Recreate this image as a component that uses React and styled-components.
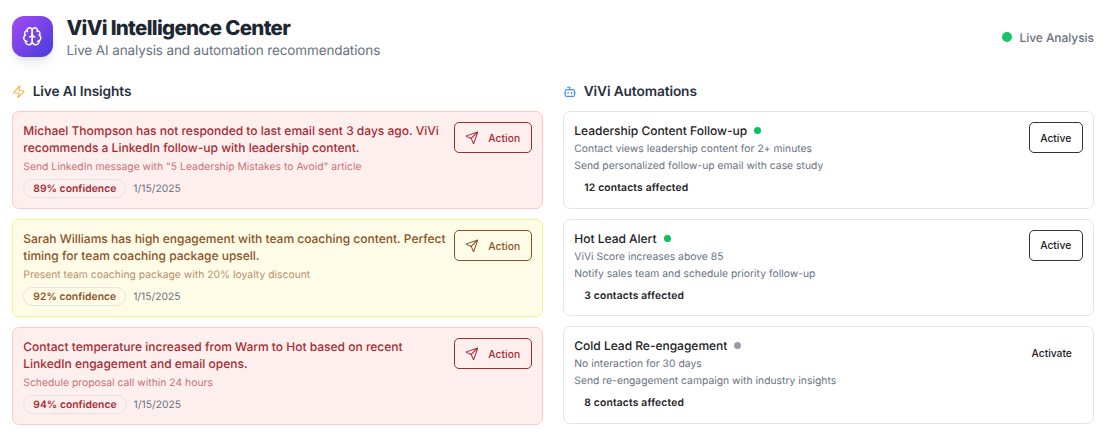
import React from "react";
import styled, { createGlobalStyle } from "styled-components";
import { Zap, Bot, Send } from "lucide-react";

const GlobalStyle = createGlobalStyle`
  *, *::before, *::after { box-sizing: border-box; }
  body {
    margin: 0;
    background: #fff;
    font-family: Inter, "Liberation Sans", sans-serif;
    -webkit-font-smoothing: antialiased;
    text-rendering: geometricPrecision;
  }
  h1, h2, h3, p { margin: 0; }
`;

const tones = {
  red: { bg: "#feefef", border: "#fdc9c9", text: "#a52a30", soft: "#c87075" },
  yellow: { bg: "#fefce6", border: "#fdee8e", text: "#8a5128", soft: "#b58f70" },
};

const Page = styled.main`
  width: 1110px;
  height: 442px;
  padding: 16px 16px 0 12px;
  overflow: hidden;
`;

const Header = styled.header`
  display: flex;
  align-items: flex-start;
  justify-content: space-between;
  height: 41px;
`;

const Brand = styled.div`
  display: flex;
  align-items: flex-start;
  gap: 13.5px;
`;

const Logo = styled.div`
  display: grid;
  place-items: center;
  width: 41px;
  height: 41px;
  border-radius: 12px;
  color: #fff;
  background: linear-gradient(135deg, #a24bf2, #4a3bdc);
  box-shadow: 0 8px 12px -3px rgba(0, 0, 0, 0.1), 0 3px 5px -3px rgba(0, 0, 0, 0.1);
`;

const Title = styled.h1`
  font-size: 20.5px;
  line-height: 24px;
  font-weight: 800;
  letter-spacing: -0.7px;
  color: #1d2733;
`;

const Subtitle = styled.p`
  font-size: 13.5px;
  line-height: 22px;
  letter-spacing: -0.12px;
  color: #68717f;
`;

const Live = styled.div`
  display: flex;
  align-items: center;
  gap: 7px;
  height: 42px;
  font-size: 12px;
  font-weight: 500;
  letter-spacing: -0.05px;
  color: #68717f;
`;

const Dot = styled.span`
  flex: none;
  width: ${(p) => p.$size}px;
  height: ${(p) => p.$size}px;
  border-radius: 50%;
  background: ${(p) => p.$color};
`;

const Columns = styled.div`
  display: grid;
  grid-template-columns: 1fr 1fr;
  column-gap: 20px;
  margin-top: 23px;
`;

const SectionTitle = styled.h2`
  display: flex;
  align-items: center;
  gap: 7px;
  height: 23px;
  margin-bottom: 8px;
  font-size: 13.7px;
  font-weight: 600;
  letter-spacing: -0.1px;
  color: #27313e;
`;

const List = styled.div`
  display: flex;
  flex-direction: column;
  gap: 10px;
`;

const Card = styled.article`
  display: flex;
  align-items: flex-start;
  justify-content: space-between;
  height: ${(p) => p.$height}px;
  padding: 10.3px;
  border: 1px solid ${(p) => (p.$tone ? p.$tone.border : "#e4e5e9")};
  border-radius: 7px;
  color: ${(p) => (p.$tone ? p.$tone.text : "#202124")};
  background: ${(p) => (p.$tone ? p.$tone.bg : "#fff")};
`;

const InsightText = styled.h3`
  font-size: 12px;
  line-height: 17px;
  font-weight: 500;
  white-space: pre;
`;

const InsightNote = styled.p`
  margin-top: 3.5px;
  font-size: 10.3px;
  line-height: 14px;
  letter-spacing: 0.03px;
  color: ${(p) => p.$color};
`;

const Meta = styled.div`
  display: flex;
  align-items: center;
  gap: 7px;
  margin-top: 5.5px;
`;

const Confidence = styled.span`
  display: flex;
  align-items: center;
  height: 19px;
  padding: 0 9px;
  border: 1px solid #e3e4e8;
  border-radius: 10px;
  font-size: 10.3px;
  font-weight: 600;
  letter-spacing: 0.05px;
`;

const DateText = styled.time`
  font-size: 10.3px;
  color: #68717f;
`;

const ActionButton = styled.button`
  display: flex;
  flex: none;
  align-items: center;
  justify-content: space-between;
  width: 78px;
  height: 31px;
  padding: 0 10.5px;
  border: 1px solid currentColor;
  border-radius: 5px;
  background: transparent;
  color: inherit;
  font: 500 10.3px Inter, sans-serif;
  letter-spacing: 0.05px;
`;

const StateButton = styled.button`
  flex: none;
  width: ${(p) => (p.$outlined ? 54 : 62)}px;
  height: 31px;
  padding: 0;
  border: 1px solid ${(p) => (p.$outlined ? "#333" : "transparent")};
  border-radius: 5px;
  background: transparent;
  color: #202124;
  font: 500 10.3px Inter, sans-serif;
`;

const AutomationName = styled.h3`
  display: flex;
  align-items: center;
  gap: 7px;
  margin-bottom: 2px;
  font-size: 12px;
  line-height: 17px;
  font-weight: 500;
  letter-spacing: -0.01px;
`;

const AutomationLine = styled.p`
  font-size: 10.3px;
  line-height: 17px;
  letter-spacing: 0.03px;
  color: #68717f;
`;

const Affected = styled.p`
  margin-top: 6px;
  padding-left: 10px;
  font-size: 10.3px;
  line-height: 14px;
  font-weight: 600;
  letter-spacing: 0.17px;
`;

const BrainIcon = () => (
  <svg
    width="20.5"
    height="20.5"
    viewBox="0 0 24 24"
    fill="none"
    stroke="currentColor"
    strokeWidth="1.75"
    strokeLinecap="round"
    strokeLinejoin="round"
  >
    <path d="M12 5a3 3 0 1 0-5.997.125 4 4 0 0 0-2.526 5.77 4 4 0 0 0 .556 6.588A4 4 0 1 0 12 18Z" />
    <path d="M12 5a3 3 0 1 1 5.997.125 4 4 0 0 1 2.526 5.77 4 4 0 0 1-.556 6.588A4 4 0 1 1 12 18Z" />
    <path d="M15 13a4.5 4.5 0 0 1-3-4 4.5 4.5 0 0 1-3 4" />
    <path d="M17.599 6.5a3 3 0 0 0 .399-1.375" />
    <path d="M6.003 5.125A3 3 0 0 0 6.401 6.5" />
    <path d="M3.477 10.896a4 4 0 0 1 .585-.396" />
    <path d="M19.938 10.5a4 4 0 0 1 .585.396" />
    <path d="M6 18a4 4 0 0 1-1.967-.516" />
    <path d="M19.967 17.484A4 4 0 0 1 18 18" />
  </svg>
);

const insights = [
  {
    tone: tones.red,
    text: "Michael Thompson has not responded to last email sent 3 days ago. ViVi\nrecommends a LinkedIn follow-up with leadership content.",
    note: 'Send LinkedIn message with "5 Leadership Mistakes to Avoid" article',
    confidence: 89,
  },
  {
    tone: tones.yellow,
    text: "Sarah Williams has high engagement with team coaching content. Perfect\ntiming for team coaching package upsell.",
    note: "Present team coaching package with 20% loyalty discount",
    confidence: 92,
  },
  {
    tone: tones.red,
    text: "Contact temperature increased from Warm to Hot based on recent\nLinkedIn engagement and email opens.",
    note: "Schedule proposal call within 24 hours",
    confidence: 94,
  },
];

const automations = [
  {
    name: "Leadership Content Follow-up",
    trigger: "Contact views leadership content for 2+ minutes",
    action: "Send personalized follow-up email with case study",
    count: 12,
    active: true,
  },
  {
    name: "Hot Lead Alert",
    trigger: "ViVi Score increases above 85",
    action: "Notify sales team and schedule priority follow-up",
    count: 3,
    active: true,
  },
  {
    name: "Cold Lead Re-engagement",
    trigger: "No interaction for 30 days",
    action: "Send re-engagement campaign with industry insights",
    count: 8,
    active: false,
  },
];

export default function App() {
  return (
    <Page>
      <GlobalStyle />
      <Header>
        <Brand>
          <Logo>
            <BrainIcon />
          </Logo>
          <div>
            <Title>ViVi Intelligence Center</Title>
            <Subtitle>Live AI analysis and automation recommendations</Subtitle>
          </div>
        </Brand>
        <Live>
          <Dot $size={10} $color="#19c468" />
          Live Analysis
        </Live>
      </Header>
      <Columns>
        <section>
          <SectionTitle>
            <Zap size={13.7} color="#f8b650" />
            Live AI Insights
          </SectionTitle>
          <List>
            {insights.map((i) => (
              <Card key={i.confidence} $tone={i.tone} $height={98}>
                <div>
                  <InsightText>{i.text}</InsightText>
                  <InsightNote $color={i.tone.soft}>{i.note}</InsightNote>
                  <Meta>
                    <Confidence>{i.confidence}% confidence</Confidence>
                    <DateText>1/15/2025</DateText>
                  </Meta>
                </div>
                <ActionButton>
                  <Send size={13.7} strokeWidth={1.8} />
                  Action
                </ActionButton>
              </Card>
            ))}
          </List>
        </section>
        <section>
          <SectionTitle>
            <Bot size={13.7} color="#4c90f6" />
            ViVi Automations
          </SectionTitle>
          <List>
            {automations.map((a) => (
              <Card key={a.name} $height={97.5}>
                <div>
                  <AutomationName>
                    {a.name}
                    <Dot $size={7} $color={a.active ? "#07c160" : "#959dab"} />
                  </AutomationName>
                  <AutomationLine>{a.trigger}</AutomationLine>
                  <AutomationLine>{a.action}</AutomationLine>
                  <Affected>{a.count} contacts affected</Affected>
                </div>
                <StateButton $outlined={a.active}>{a.active ? "Active" : "Activate"}</StateButton>
              </Card>
            ))}
          </List>
        </section>
      </Columns>
    </Page>
  );
}
